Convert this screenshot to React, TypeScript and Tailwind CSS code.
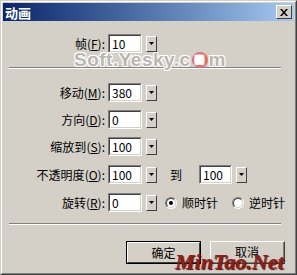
import React from 'react';

const font = { fontFamily: '"Noto Sans CJK SC", "DejaVu Sans", sans-serif' };

function Field({ value, w = 'w-[34px]' }: { value: string; w?: string }) {
  return (
    <div className={`${w} h-[19px] border-t border-l border-[#808080] border-b border-r border-b-white border-r-white`}>
      <div className="h-full border-t border-l border-[#404040] border-b border-r border-b-[#d4d0c8] border-r-[#d4d0c8] bg-white pl-[2px] text-[12px] leading-[15px] text-black">
        {value}
      </div>
    </div>
  );
}

function Drop() {
  return (
    <div className="ml-[4px] w-[11px] h-[16px] bg-[#d4d0c8] border-t border-l border-white border-b border-r border-b-[#404040] border-r-[#404040] flex items-center justify-center">
      <svg width="5" height="3" viewBox="0 0 5 3">
        <path d="M0 0h5L2.5 3z" fill="#000" />
      </svg>
    </div>
  );
}

function Row({ label, k, value, className = '', children }: { label: string; k: string; value: string; className?: string; children?: React.ReactNode }) {
  return (
    <div className={`flex items-center h-[19px] ${className}`}>
      <div className="w-[102px] text-right text-[12px] leading-[19px] text-black">
        {label}(<span className="underline">{k}</span>):
      </div>
      <div className="ml-[3px]">
        <Field value={value} />
      </div>
      <Drop />
      {children}
    </div>
  );
}

function Radio({ on }: { on?: boolean }) {
  return (
    <div className="w-[12px] h-[12px] rounded-full border border-t-[#808080] border-l-[#808080] border-b-white border-r-white">
      <div className="w-full h-full rounded-full bg-white border border-t-[#404040] border-l-[#404040] border-b-[#d4d0c8] border-r-[#d4d0c8] flex items-center justify-center">
        {on && <div className="w-[4px] h-[4px] rounded-full bg-black" />}
      </div>
    </div>
  );
}

function Sep({ className = '' }: { className?: string }) {
  return <div className={`ml-[6px] w-[272px] border-t border-[#808080] border-b border-b-white ${className}`} />;
}

export default function App() {
  return (
    <div style={font} className="relative w-[297px] h-[275px] overflow-hidden border-t border-l border-[#d4d0c8] border-b border-r border-b-[#404040] border-r-[#404040]">
      <div className="h-full border-t border-l border-white border-b border-r border-b-[#808080] border-r-[#808080] bg-[#d4d0c8] p-[1px] flex flex-col">
        {/* title */}
        <div className="h-[18px] flex items-center bg-gradient-to-r from-[#0a246a] to-[#a6caf0]">
          <span className="pl-[2px] text-[13px] font-bold text-white leading-none">动画</span>
          <div className="ml-auto mr-[2px] w-[16px] h-[14px] bg-[#d4d0c8] border-t border-l border-white border-b border-r border-b-[#404040] border-r-[#404040] flex items-center justify-center">
            <svg width="8" height="7" viewBox="0 0 8 7">
              <path d="M0 0h2l2 2.5L6 0h2L5 3.5 8 7H6L4 4.5 2 7H0l3-3.5z" fill="#000" />
            </svg>
          </div>
        </div>

        <Row label="帧" k="F" value="10" className="mt-[13px]" />
        <Sep className="mt-[14px]" />

        <Row label="移动" k="M" value="380" className="mt-[14px]" />
        <Row label="方向" k="D" value="0" className="mt-[8px]" />
        <Row label="缩放到" k="S" value="100" className="mt-[8px]" />
        <Row label="不透明度" k="O" value="100" className="mt-[9px]">
          <span className="ml-[13px] text-[12px] text-black">到</span>
          <div className="ml-[17px]">
            <Field value="100" w="w-[33px]" />
          </div>
          <Drop />
        </Row>
        <Row label="旋转" k="R" value="0" className="mt-[9px]">
          <div className="ml-[8px]">
            <Radio on />
          </div>
          <span className="ml-[5px] text-[12px] text-black">顺时针</span>
          <div className="ml-[14px]">
            <Radio />
          </div>
          <span className="ml-[5px] text-[12px] text-black">逆时针</span>
        </Row>

        <Sep className="mt-[11px]" />

        <div className="mt-[16px] ml-[123px] flex gap-[9px]">
          <div className="w-[75px] h-[23px] border border-black">
            <div className="h-full border-t border-l border-white border-b border-r border-b-[#404040] border-r-[#404040] flex items-center justify-center text-[12px] text-black">
              确定
            </div>
          </div>
          <div className="w-[75px] h-[23px] border-t border-l border-white border-b border-r border-b-[#404040] border-r-[#404040]">
            <div className="h-full border-b border-r border-[#808080] flex items-center justify-center text-[12px] text-black">
              取消
            </div>
          </div>
        </div>
      </div>

      {/* watermarks */}
      <div className="absolute left-[73px] top-[45px] flex items-center text-[19px] font-black tracking-[0.5px] text-[#bab6b0] pointer-events-none" style={{ fontFamily: '"Liberation Sans", sans-serif', textShadow: '1px 1px 0 #fff, -1px -1px 0 #fff, 1px -1px 0 #fff, -1px 1px 0 #fff' }}>
        Soft.Yesky.c
        <span className="mx-[1px] w-[16px] h-[16px] rounded-full bg-[#e07070] inline-flex items-center justify-center text-[9px] text-white">团</span>
        m
      </div>
      <div className="absolute left-[174px] top-[244px] text-[22px] italic font-bold text-[#8b1e1e] pointer-events-none" style={{ fontFamily: '"Liberation Serif", serif', textShadow: '1px 1px 1px #4a1010' }}>
        MinTao.Net
      </div>
    </div>
  );
}
